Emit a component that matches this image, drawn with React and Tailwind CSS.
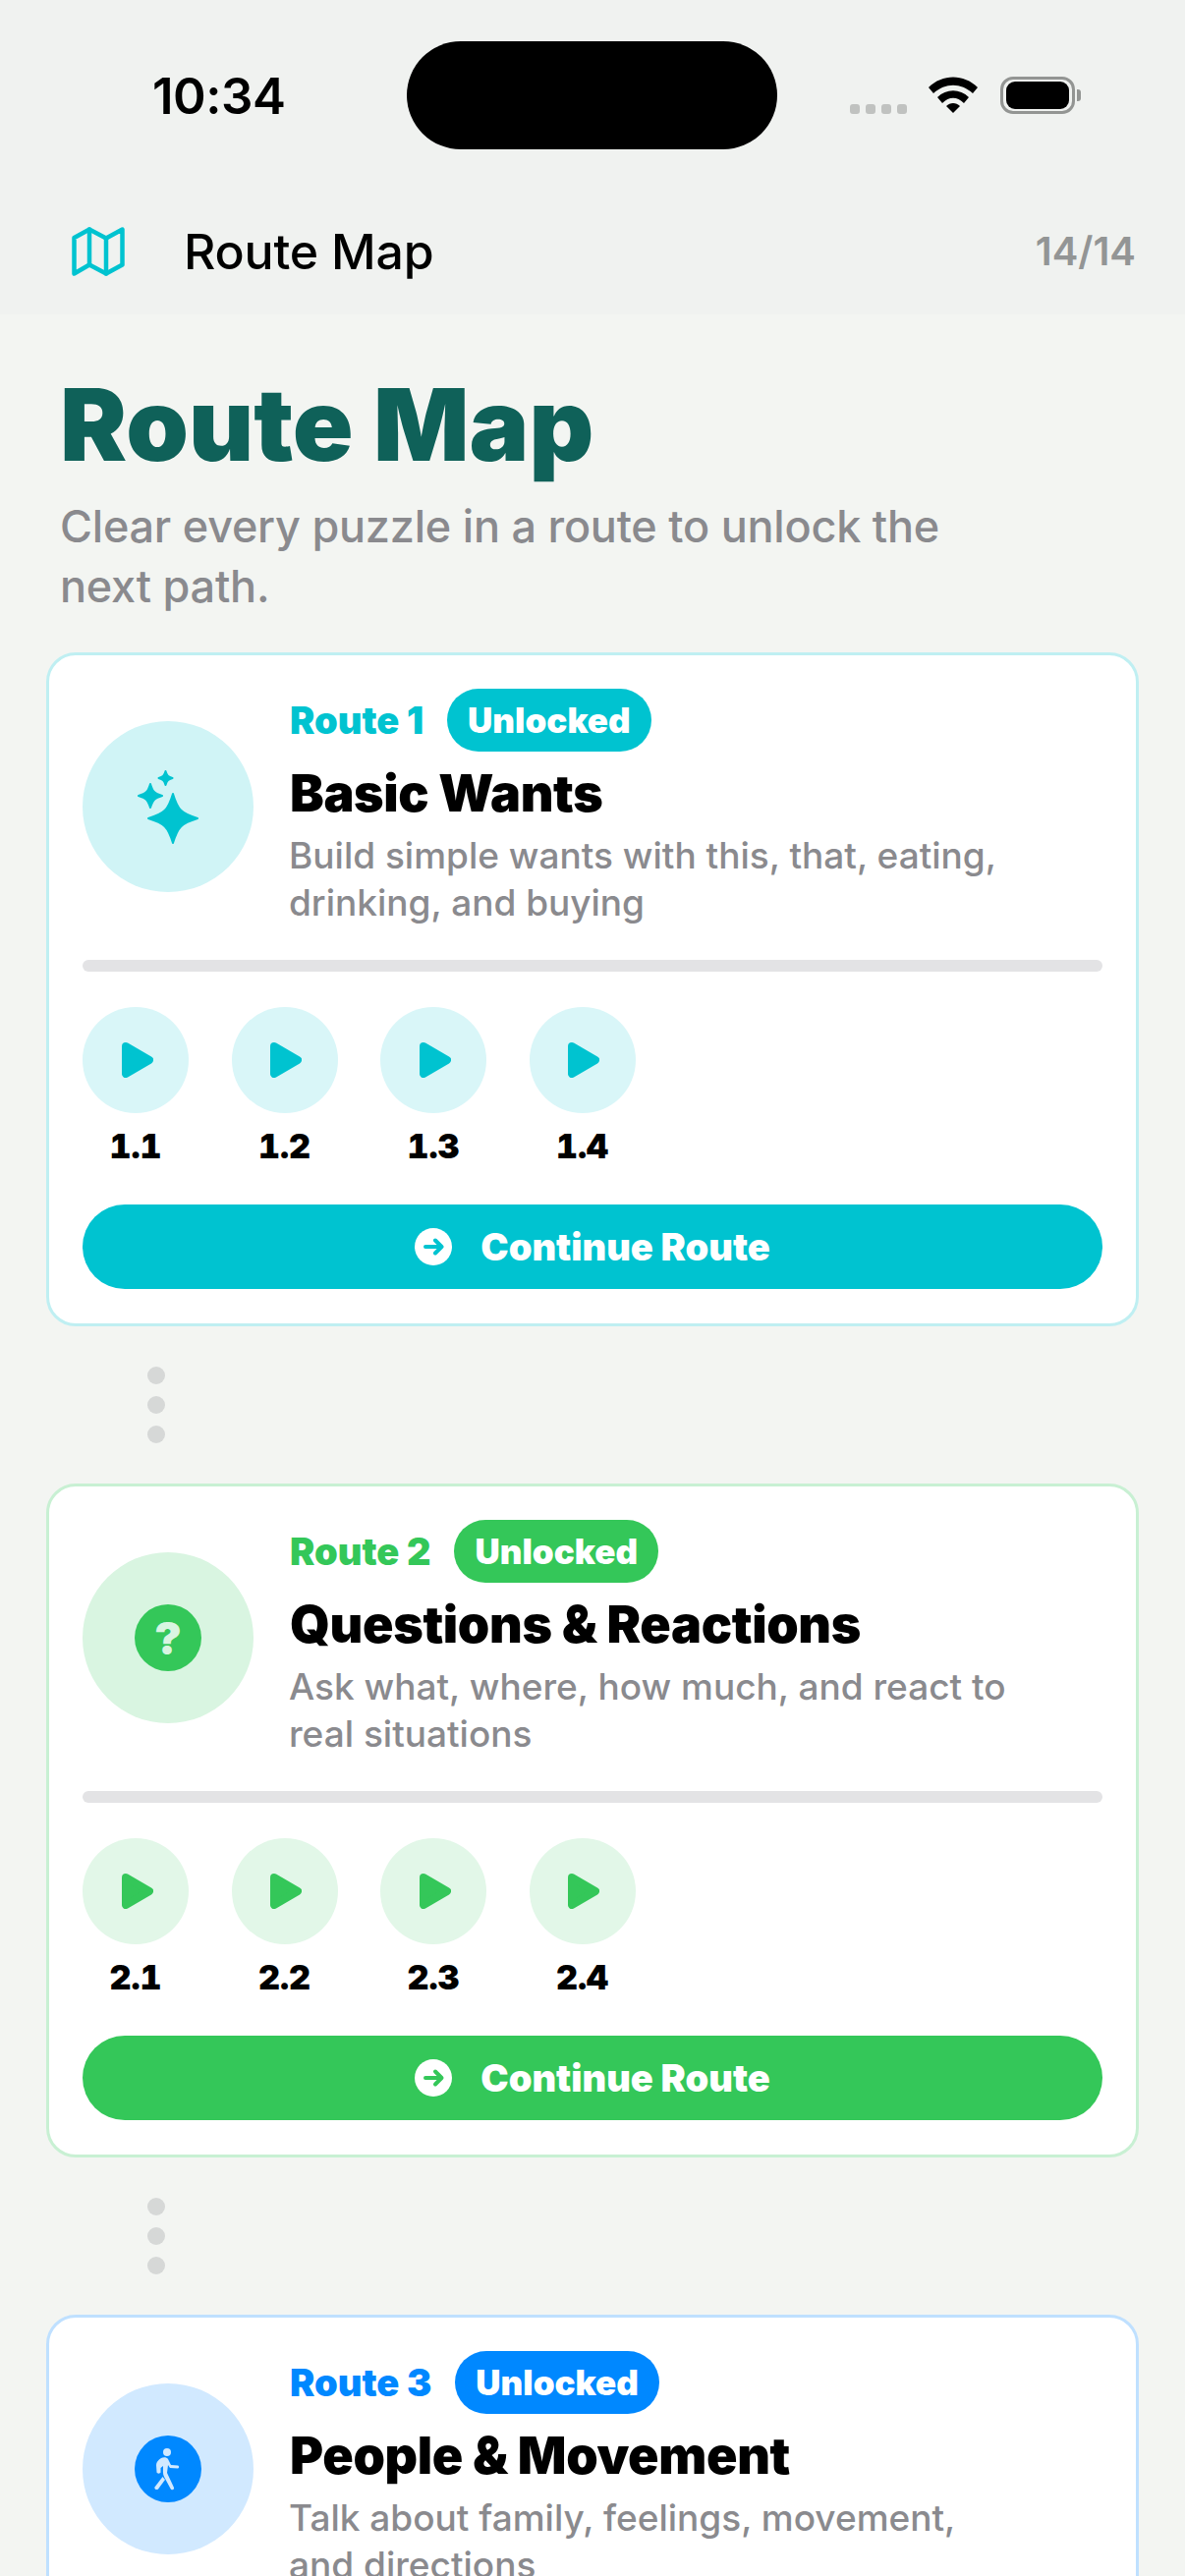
import React from "react";

const routes = [
  {
    id: 1,
    name: "Basic Wants",
    desc: ["Build simple wants with this, that, eating,", "drinking, and buying"],
    text: "text-[#00c3d0]",
    bg: "bg-[#00c3d0]",
    fill: "#00c3d0",
    border: "border-[#bfeff2]",
    soft: "bg-[#d0f4f6]",
    softer: "bg-[#d9f6f8]",
  },
  {
    id: 2,
    name: "Questions & Reactions",
    desc: ["Ask what, where, how much, and react to", "real situations"],
    text: "text-[#34c759]",
    bg: "bg-[#34c759]",
    fill: "#34c759",
    border: "border-[#c8f0d3]",
    soft: "bg-[#d9f5e1]",
    softer: "bg-[#e2f7e8]",
  },
  {
    id: 3,
    name: "People & Movement",
    desc: ["Talk about family, feelings, movement,", "and directions"],
    text: "text-[#0088ff]",
    bg: "bg-[#0088ff]",
    fill: "#0088ff",
    border: "border-[#bfe0ff]",
    soft: "bg-[#d1e9ff]",
    softer: "bg-[#d9edff]",
  },
];

const StatusBar = () => (
  <div className="relative h-[198px] shrink-0">
    <div className="absolute left-[155px] top-[70px] text-[51px] leading-[56px] font-semibold tracking-[-0.5px] text-black">10:34</div>
    <div className="absolute left-[414px] top-[42px] h-[110px] w-[377px] rounded-[55px] bg-black" />
    <div className="absolute left-[865px] top-[106px] flex gap-[6px]">
      {[0, 1, 2, 3].map((i) => (
        <div key={i} className="h-[10px] w-[10px] rounded-[3px] bg-[#c0c2c0]" />
      ))}
    </div>
    <svg className="absolute left-[945px] top-[78px]" width="50" height="38" viewBox="0 0 50 38">
      <path d="M0 11 C14 -3 36 -3 50 11 L45 17 C33 6 17 6 5 17 Z" fill="#000" />
      <path d="M9 21 C18 12 32 12 41 21 L36 27 C29 20 21 20 14 27 Z" fill="#000" />
      <path d="M18 30 C22 26 28 26 32 30 L25 37 Z" fill="#000" />
    </svg>
    <div className="absolute left-[1018px] top-[78px] flex h-[38px] w-[76px] items-center justify-center rounded-[13px] border-[3px] border-[#939593]">
      <div className="h-[28px] w-[64px] rounded-[9px] bg-black" />
    </div>
    <div className="absolute left-[1096px] top-[91px] h-[12px] w-[4px] rounded-r-[3px] bg-[#939593]" />
  </div>
);

// four point star, tips get rounded by the stroke
const starPath = (cx, cy, r) => {
  const a = r * 0.2;
  const b = r * 0.34;
  return [
    `M${cx} ${cy - r}`,
    `C${cx + a} ${cy - b} ${cx + b} ${cy - a} ${cx + r} ${cy}`,
    `C${cx + b} ${cy + a} ${cx + a} ${cy + b} ${cx} ${cy + r}`,
    `C${cx - a} ${cy + b} ${cx - b} ${cy + a} ${cx - r} ${cy}`,
    `C${cx - b} ${cy - a} ${cx - a} ${cy - b} ${cx} ${cy - r}Z`,
  ].join(" ");
};

const Sparkles = ({ color }) => (
  <svg width="62" height="75" viewBox="0 0 62 75" fill={color} stroke={color} strokeWidth="2" strokeLinejoin="round">
    <path d={starPath(36, 49, 25)} />
    <path d={starPath(13, 26, 12)} />
    <path d={starPath(28.5, 8, 7)} />
  </svg>
);

const QuestionBadge = ({ bg }) => (
  <div className={`flex h-[68px] w-[68px] items-center justify-center rounded-full ${bg} text-[46px] leading-none font-black text-[#d9f5e1]`}>?</div>
);

const WalkBadge = ({ bg }) => (
  <div className={`flex h-[68px] w-[68px] items-center justify-center rounded-full ${bg}`}>
    <svg width="30" height="44" viewBox="0 0 30 44" fill="#d1e9ff">
      <circle cx="14" cy="5" r="4" />
      <path d="M8 11 C10 10 14 10 15 12 L18 18 L25 18.5 C26.5 19 26.5 21 25 21.5 L17 21 L15 18 L14 26 L21 41 C21.5 43.5 18.5 44 17.5 42 L11 30 C9.5 27 10 24 10 19 L7.5 21 L7.5 25.5 C7 27 4 27 3.5 25.5 L3 18 C3 15 5 13 8 11 Z" />
      <path d="M9.5 30 L12 33 L5 42.5 C3.5 44 0.5 42.5 1.5 40.5 Z" />
    </svg>
  </div>
);

const MapIcon = () => (
  <svg className="ml-px" width="54" height="50" viewBox="0 0 54 50" fill="none" stroke="#00c3d0" strokeWidth="4.5" strokeLinejoin="round" strokeLinecap="round">
    <path d="M2.5 11 L18 2.5 L35 11.5 L51.5 2.5 L51.5 38.5 L35 47.5 L18 38.5 L2.5 47.5 Z" />
    <path d="M18 2.5 V38.5 M35 11.5 V47.5" />
  </svg>
);

const PlayIcon = ({ color }) => (
  <svg className="ml-[3px]" width="32" height="36" viewBox="0 0 32 36">
    <path d="M4 4 L28 18 L4 32 Z" fill={color} stroke={color} strokeWidth="8" strokeLinejoin="round" />
  </svg>
);

const ArrowBadge = ({ color }) => (
  <svg width="38" height="38" viewBox="0 0 38 38">
    <circle cx="19" cy="19" r="19" fill="#fff" />
    <path d="M11 19 H27 M21 12.5 L27.5 19 L21 25.5" fill="none" stroke={color} strokeWidth="4" strokeLinecap="round" strokeLinejoin="round" />
  </svg>
);

const RouteIcon = ({ route }) => {
  if (route.id === 1) return <Sparkles color={route.fill} />;
  if (route.id === 2) return <QuestionBadge bg={route.bg} />;
  return <WalkBadge bg={route.bg} />;
};

const RouteCard = ({ route }) => (
  <div className={`h-[686px] shrink-0 rounded-[30px] border-[3px] ${route.border} bg-white px-[34px] pt-[34px]`}>
    <div className="flex h-[276px] gap-[37px]">
      <div className={`mt-[33px] flex h-[174px] w-[174px] shrink-0 items-center justify-center rounded-full ${route.soft}`}>
        <RouteIcon route={route} />
      </div>
      <div className="min-w-0 flex-1">
        <div className="flex h-[64px] items-center gap-[24px]">
          <span className={`text-[38px] leading-[44px] font-black ${route.text}`}>Route {route.id}</span>
          <span className={`flex h-[64px] items-center rounded-full px-[21px] text-[35px] font-black text-white ${route.bg}`}>Unlocked</span>
        </div>
        <div className="mt-[12px] text-[52px] leading-[62px] font-black tracking-[-0.35px] text-black whitespace-nowrap">{route.name}</div>
        <div className="-ml-px mt-[8px] text-[37px] leading-[48px] font-medium text-[#8a8a8e]">
          {route.desc.map((line) => (
            <div key={line} className="whitespace-nowrap">{line}</div>
          ))}
        </div>
      </div>
    </div>
    <div className="h-[12px] rounded-full bg-[#e3e3e5]" />
    <div className="mt-[36px] flex gap-[43.5px]">
      {[1, 2, 3, 4].map((n) => (
        <div key={n} className="flex w-[108px] flex-col items-center">
          <div className={`flex h-[108px] w-[108px] items-center justify-center rounded-full ${route.softer}`}>
            <PlayIcon color={route.fill} />
          </div>
          <div className="mt-[14px] text-[34px] leading-[40px] font-black tabular-nums text-black">{route.id}.{n}</div>
        </div>
      ))}
    </div>
    <div className={`mt-[39px] flex h-[86px] items-center justify-center gap-[29px] rounded-full ${route.bg}`}>
      <ArrowBadge color={route.fill} />
      <span className="text-[38px] font-black text-white">Continue Route</span>
    </div>
  </div>
);

const Connector = () => (
  <div className="flex h-[160px] shrink-0 flex-col justify-center gap-[12px] pl-[103px]">
    {[0, 1, 2].map((i) => (
      <div key={i} className="h-[18px] w-[18px] rounded-full bg-[#d6d8d7]" />
    ))}
  </div>
);

export default function App() {
  return (
    <div className="flex h-[2622px] w-[1206px] flex-col overflow-hidden bg-[#f3f5f2] font-['Inter',sans-serif]">
      <div className="flex h-[320px] shrink-0 flex-col bg-[#f0f2f0]">
        <StatusBar />
        <div className="flex h-[116px] items-center pl-[72px] pr-[50px]">
          <MapIcon />
          <span className="ml-[60px] text-[50px] font-medium tracking-[-0.2px] text-black">Route Map</span>
          <span className="ml-auto text-[40px] font-semibold text-[#939595]">14/14</span>
        </div>
      </div>
      <div className="px-[47px]">
        <h1 className="ml-[14px] mt-[52px] text-[102px] leading-[120px] font-black text-[#0f6159]">Route Map</h1>
        <div className="ml-[14px] mt-[13px] h-[122px] text-[45px] leading-[61px] font-medium tracking-[-0.23px] text-[#8a8a8e]">
          <div>Clear every puzzle in a route to unlock the</div>
          <div>next path.</div>
        </div>
        <div className="mt-[37px] flex flex-col">
          {routes.map((route, i) => (
            <React.Fragment key={route.id}>
              <RouteCard route={route} />
              {i < routes.length - 1 && <Connector />}
            </React.Fragment>
          ))}
        </div>
      </div>
    </div>
  );
}
